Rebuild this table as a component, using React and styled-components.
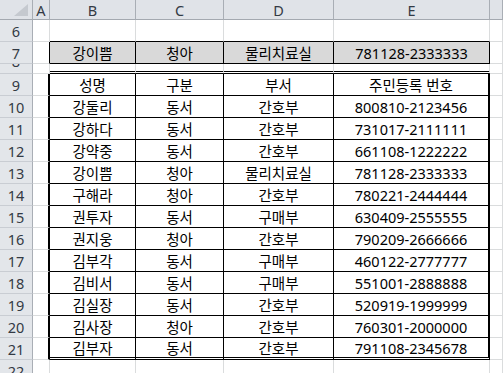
import React from "react";
import styled, { createGlobalStyle } from "styled-components";

const GlobalStyle = createGlobalStyle`
  html, body {
    margin: 0;
    padding: 0;
    background: #ffffff;
    overflow: hidden;
  }
`;

// column widths include the 1px gridline on the right
const COLS = [
  { key: "A", w: 17 },
  { key: "B", w: 86 },
  { key: "C", w: 88 },
  { key: "D", w: 110 },
  { key: "E", w: 156 },
];

const picked = ["강이쁨", "청아", "물리치료실", "781128-2333333"];
const header = ["성명", "구분", "부서", "주민등록 번호"];
const people = [
  ["강둘리", "동서", "간호부", "800810-2123456"],
  ["강하다", "동서", "간호부", "731017-2111111"],
  ["강약중", "동서", "간호부", "661108-1222222"],
  ["강이쁨", "청아", "물리치료실", "781128-2333333"],
  ["구해라", "청아", "간호부", "780221-2444444"],
  ["권투자", "동서", "구매부", "630409-2555555"],
  ["권지웅", "청아", "간호부", "790209-2666666"],
  ["김부각", "동서", "구매부", "460122-2777777"],
  ["김비서", "동서", "구매부", "551001-2888888"],
  ["김실장", "동서", "간호부", "520919-1999999"],
  ["김사장", "청아", "간호부", "760301-2000000"],
  ["김부자", "동서", "간호부", "791108-2345678"],
];

const Sheet = styled.div`
  width: 503px;
  height: 373px;
  overflow: hidden;
  display: flex;
  flex-direction: column;
  font-family: "Noto Sans", "Noto Sans CJK KR", sans-serif;
  font-size: 14.5px;
  color: #000;
`;

const Row = styled.div`
  display: flex;
  flex: none;
  height: ${p => p.$h}px;
`;

const Corner = styled.div`
  box-sizing: border-box;
  width: 33px;
  height: 100%;
  background: #e0e3e8;
  border-right: 1px solid #a9aeb5;
  border-bottom: 1px solid #a4a9b0;
  display: flex;
  align-items: flex-end;
  justify-content: flex-end;
  padding: 0 4px 3px 0;
`;

const ColHead = styled.div`
  box-sizing: border-box;
  width: ${p => (p.$w ? `${p.$w}px` : "auto")};
  flex: ${p => (p.$w ? "none" : "1")};
  height: 100%;
  background: #e0e3e8;
  border-right: 1px solid #a9aeb5;
  border-bottom: 1px solid #a4a9b0;
  display: flex;
  align-items: center;
  justify-content: center;
  color: #333a44;
  font-size: 14.5px;
`;

const RowHead = styled.div`
  box-sizing: border-box;
  width: 33px;
  flex: none;
  height: 100%;
  background: #e3e6ea;
  border-right: 1px solid #a9aeb5;
  border-bottom: 1px solid #c9cdd3;
  display: flex;
  align-items: ${p => (p.$squashed ? "flex-start" : "center")};
  justify-content: center;
  color: #333a44;
  overflow: hidden;
  line-height: 20px;

  span {
    margin-top: ${p => (p.$squashed ? "-13px" : "0")};
  }
`;

const Cell = styled.div`
  box-sizing: border-box;
  width: ${p => (p.$w ? `${p.$w}px` : "auto")};
  flex: ${p => (p.$w ? "none" : "1")};
  height: 100%;
  background: ${p => p.$fill || "transparent"};
  border-right: ${p => p.$right || "1px solid #dadcdd"};
  border-bottom: ${p => p.$bottom || "1px solid #dadcdd"};
  display: flex;
  align-items: center;
  justify-content: center;
  white-space: nowrap;
  overflow: hidden;
`;

const Triangle = () => (
  <svg width="14" height="12" viewBox="0 0 14 12">
    <polygon points="14,0 14,12 0,12" fill="#c5c9cf" />
  </svg>
);

const HeaderRow = () => (
  <Row $h={20}>
    <Corner>
      <Triangle />
    </Corner>
    {COLS.map(c => (
      <ColHead key={c.key} $w={c.w}>
        {c.key}
      </ColHead>
    ))}
    <ColHead />
  </Row>
);

// kind: plain | boxTop | band | topDouble | table | tableLast
const bordersFor = (kind, idx) => {
  const b = {};
  const black = "1px solid #000";
  if (kind === "boxTop") {
    if (idx > 0) b.bottom = black;
  }
  if (kind === "band") {
    if (idx === 0) b.right = black;
    else {
      b.right = black;
      b.bottom = black;
      b.fill = "#d9d9d9";
    }
  }
  if (kind === "topDouble") {
    if (idx > 0) b.bottom = "3px double #000";
  }
  if (kind === "table" || kind === "tableLast") {
    if (idx === 0) b.right = "2px solid #000";
    else {
      b.right = idx === 4 ? "2px solid #000" : black;
      b.bottom = kind === "tableLast" ? "3px double #000" : black;
    }
  }
  return b;
};

const SheetRow = ({ num, h, kind = "plain", values = [] }) => (
  <Row $h={h}>
    <RowHead $squashed={h < 16}>
      <span>{num}</span>
    </RowHead>
    {COLS.map((c, i) => {
      const b = bordersFor(kind, i);
      return (
        <Cell key={c.key} $w={c.w} $right={b.right} $bottom={b.bottom} $fill={b.fill}>
          {i > 0 ? values[i - 1] : null}
        </Cell>
      );
    })}
    <Cell />
  </Row>
);

export default function App() {
  return (
    <>
      <GlobalStyle />
      <Sheet>
        <HeaderRow />
        <SheetRow num={6} h={22} kind="boxTop" />
        <SheetRow num={7} h={22} kind="band" values={picked} />
        <SheetRow num={8} h={10} kind="topDouble" />
        <SheetRow num={9} h={22} kind="table" values={header} />
        {people.map((p, i) => (
          <SheetRow
            key={i}
            num={10 + i}
            h={22}
            kind={i === people.length - 1 ? "tableLast" : "table"}
            values={p}
          />
        ))}
        <SheetRow num={22} h={22} />
      </Sheet>
    </>
  );
}
